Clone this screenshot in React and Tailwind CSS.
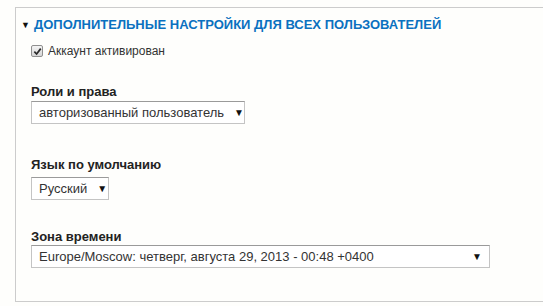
import { useState } from "react";

const ROLES = ["авторизованный пользователь", "администратор"];
const LANGS = ["Русский", "English"];
const ZONES = ["Europe/Moscow: четверг, августа 29, 2013 - 00:48 +0400"];

function Select({ value, options, onChange, className }) {
  return (
    <div
      className={
        "relative flex h-[23px] items-center border border-[#c4c4c4] border-t-[#9a9a9a] bg-white pl-[7px] pr-[7px] text-[13px] text-[#333] " +
        className
      }
    >
      <span className="flex-1 whitespace-nowrap">{value}</span>
      <span className="ml-[10px] text-[10px] leading-none text-[#111]">▼</span>
      <select
        value={value}
        onChange={(e) => onChange(e.target.value)}
        className="absolute inset-0 opacity-0"
      >
        {options.map((o) => (
          <option key={o}>{o}</option>
        ))}
      </select>
    </div>
  );
}

export default function App() {
  const [active, setActive] = useState(true);
  const [role, setRole] = useState(ROLES[0]);
  const [lang, setLang] = useState(LANGS[0]);
  const [zone, setZone] = useState(ZONES[0]);

  return (
    <div className="h-[306px] w-[543px] overflow-hidden bg-[#fefefc] pt-[7px] pl-[15px] font-['Liberation_Sans',Arial,sans-serif]">
      {/* Дополнительные настройки */}
      <div className="h-[295px] w-[560px] border-y border-l border-[#cccccc] pt-[9px] pl-[5px]">
        <div className="flex h-[16px] items-center">
          <span className="mr-[4px] text-[9px] leading-none text-[#111]">▼</span>
          <h2 className="text-[13px] font-bold uppercase leading-[16px] text-[#0a71c0]">
            Дополнительные настройки для всех пользователей
          </h2>
        </div>

        <div className="pl-[10px]">
          <label className="mt-[11px] flex h-[14px] cursor-pointer items-center">
            <span
              onClick={() => setActive((v) => !v)}
              className="flex h-[12px] w-[12px] items-center justify-center rounded-[2px] border border-[#8f8f8f] bg-gradient-to-b from-[#f4f4f4] to-[#d6d6d6]"
            >
              {active && (
                <svg viewBox="0 0 10 10" className="h-[9px] w-[9px]">
                  <path d="M1.5 5.2 L4 7.8 L8.6 1.8" fill="none" stroke="#2b2b2b" strokeWidth="1.9" />
                </svg>
              )}
            </span>
            <span className="ml-[5px] text-[12px] text-[#333]">Аккаунт активирован</span>
          </label>

          <div className="mt-[26px]">
            <div className="mb-[1px] text-[13px] font-bold leading-[16px] text-[#222]">Роли и права</div>
            <Select value={role} options={ROLES} onChange={setRole} className="w-[214px]" />
          </div>

          <div className="mt-[33px]">
            <div className="mb-[4px] text-[13px] font-bold leading-[16px] text-[#222]">Язык по умолчанию</div>
            <Select value={lang} options={LANGS} onChange={setLang} className="w-[78px]" />
          </div>

          <div className="mt-[29px]">
            <div className="text-[13px] font-bold leading-[16px] text-[#222]">Зона времени</div>
            <Select value={zone} options={ZONES} onChange={setZone} className="w-[459px]" />
          </div>
        </div>
      </div>
    </div>
  );
}
